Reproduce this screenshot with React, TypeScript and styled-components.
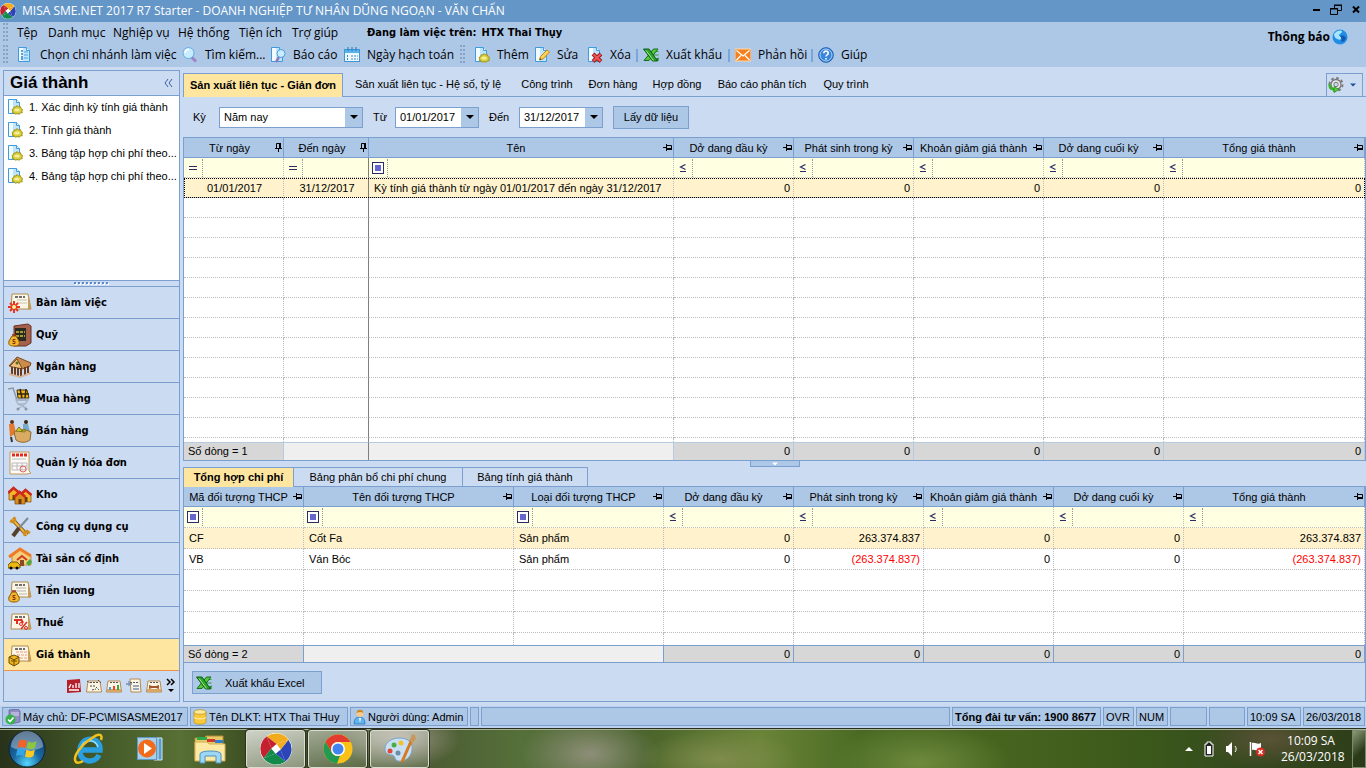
import React from "react";
import styled, { createGlobalStyle, css } from "styled-components";

const c = {
  title: "#6496c8",
  bar: "#adc7e7",
  panel: "#cbdbf1",
  line: "#7ba0cf",
  tab: "#ffe6a0",
  filter: "#ffffe1",
  selected: "#fff2cc",
  dot: "#bdbdbd",
};
const ui = `"Open Sans", "Noto Sans", sans-serif`;
const grid = `"Liberation Sans", Arial, sans-serif`;
const nav = `"DejaVu Sans Condensed", "DejaVu Sans", sans-serif`;

const Global = createGlobalStyle`
  *, *::before, *::after { box-sizing: border-box; }
  body { margin: 0; background: ${c.panel}; color: #000; font: 11px/14px ${grid}; }
  button, input, select { font: inherit; color: inherit; margin: 0; border-radius: 0; }
  button { padding: 0; border: 0; background: none; white-space: nowrap; text-align: left; }
  svg { display: block; flex: none; }
`;

const Page = styled.div`
  display: flex;
  flex-direction: column;
  min-height: 100vh;
`;

/* ---------- title, menu, toolbar ---------- */
const TitleBar = styled.header`
  display: flex;
  align-items: center;
  height: 22px;
  background: ${c.title};
  color: #fff;
  font: 12px/16px ${ui};
`;
const TitleText = styled.h1`
  flex: 1;
  margin: 0 0 0 6px;
  font: inherit;
  white-space: nowrap;
`;
const WindowButtons = styled.div`
  display: flex;
  align-items: center;
  gap: 8px;
  padding: 0 4px 2px 0;
`;
const Bars = styled.div`
  display: flex;
  height: 45px;
  background: ${c.bar};
  font: 12px/16px ${ui};
`;
const BarRows = styled.div`
  flex: 1;
  min-width: 0;
`;
const BarRow = styled.div<{ $h: number }>`
  display: flex;
  align-items: center;
  height: ${(p) => p.$h}px;
`;
const Grip = styled.span`
  width: 6px;
  height: 20px;
  margin: 0 8px 0 3px;
  background-image: radial-gradient(circle at 1px 1px, #8aa3c4 1px, transparent 1px);
  background-size: 3px 4px;
`;
const MenuButton = styled.button<{ $w: number }>`
  width: ${(p) => p.$w}px;
`;
const Working = styled.strong`
  display: flex;
  gap: 5px;
  font: 700 11px/16px ${nav};
  white-space: nowrap;
`;
const ToolButton = styled.button<{ $w: number }>`
  display: flex;
  align-items: center;
  gap: 7px;
  width: ${(p) => p.$w}px;
`;
const Separator = styled.span`
  width: 2px;
  height: 13px;
  margin-right: 5px;
  background: #7ba6da;
`;
const Notice = styled.a`
  display: flex;
  align-items: center;
  gap: 2px;
  height: 30px;
  margin-right: 18px;
  color: #000;
  font: 700 12px/16px ${ui};
  text-decoration: none;
`;

/* ---------- side panel ---------- */
const Workspace = styled.div`
  flex: 1;
  display: flex;
  gap: 3px;
  padding: 3px 0 4px 3px;
  background: ${c.panel};
`;
const Side = styled.aside`
  display: flex;
  flex-direction: column;
  width: 177px;
  flex: none;
  border: 1px solid ${c.line};
`;
const SideHead = styled.div`
  display: flex;
  align-items: center;
  justify-content: space-between;
  height: 25px;
  padding: 0 6px;
  border-bottom: 1px solid ${c.line};
`;
const SideTitle = styled.h2`
  margin: 0;
  font: 700 17px/20px ${grid};
`;
const TaskList = styled.ul`
  flex: 1;
  min-height: 184px;
  margin: 0;
  padding: 0;
  list-style: none;
  background: #fff;
`;
const TaskLink = styled.a`
  display: flex;
  align-items: center;
  gap: 6px;
  height: 23px;
  padding: 0 0 2px 3px;
  color: #000;
  text-decoration: none;
  white-space: nowrap;
`;
const SideSplit = styled.div`
  display: flex;
  align-items: center;
  justify-content: center;
  height: 6px;
  border-top: 1px solid ${c.line};
`;
const NavButton = styled.button<{ $on?: boolean }>`
  display: flex;
  align-items: center;
  gap: 4px;
  width: 100%;
  height: 32px;
  padding-left: 4px;
  border-top: 1px solid ${c.line};
  background: ${(p) => (p.$on ? c.tab : c.panel)};
  font: 700 11px/16px ${nav};
`;
const NavFoot = styled.div`
  display: flex;
  align-items: center;
  justify-content: flex-end;
  gap: 4px;
  height: 31px;
  padding-right: 3px;
  border-top: 1px solid #f0924a;
`;

/* ---------- main area ---------- */
const Main = styled.main`
  flex: 1;
  min-width: 0;
  display: flex;
  flex-direction: column;
`;
const TabStrip = styled.div`
  display: flex;
  align-items: flex-end;
  height: 27px;
  padding-right: 3px;
  border-bottom: 1px solid ${c.line};
`;
const Tab = styled.button<{ $w: number; $on?: boolean }>`
  width: ${(p) => p.$w}px;
  height: 23px;
  padding-bottom: 1px;
  text-align: center;
  ${(p) =>
    p.$on &&
    css`
      position: relative;
      height: 24px;
      margin-bottom: -1px;
      padding-bottom: 2px;
      border: 1px solid ${c.line};
      border-bottom: 0;
      background: ${c.tab};
      font-weight: 700;
    `}
`;
const Spacer = styled.span`
  flex: 1;
`;
const GearButton = styled.button`
  display: flex;
  align-items: center;
  gap: 6px;
  width: 37px;
  height: 23px;
  padding-left: 1px;
  border: 1px solid ${c.line};
  border-bottom: 0;
`;
const Query = styled.form`
  display: flex;
  align-items: center;
  height: 40px;
  padding-left: 10px;
`;
const Label = styled.label<{ $w: number }>`
  width: ${(p) => p.$w}px;
`;
const Combo = styled.span<{ $w: number }>`
  position: relative;
  display: flex;
  width: ${(p) => p.$w}px;
  height: 21px;
  margin-right: 10px;
  border: 1px solid ${c.line};
  background: #fff;
  select,
  input {
    width: 100%;
    padding: 0 4px 1px;
    border: 0;
    outline: 0;
    background: none;
    appearance: none;
  }
`;
const Drop = styled.span`
  position: absolute;
  top: 0;
  right: 0;
  bottom: 0;
  display: flex;
  align-items: center;
  justify-content: center;
  width: 17px;
  background: ${c.bar};
  pointer-events: none;
`;
const PushButton = styled.button<{ $w: number }>`
  display: flex;
  align-items: center;
  justify-content: ${(p) => (p.$w > 100 ? "flex-start" : "center")};
  gap: 13px;
  width: ${(p) => p.$w}px;
  height: 23px;
  padding: 0 3px;
  border: 1px solid ${c.line};
  background: ${c.bar};
`;

const Table = styled.table<{ $row: number; $edge: string }>`
  width: 100%;
  table-layout: fixed;
  border: 1px solid ${c.line};
  border-spacing: 0;
  background: #fff;
  th,
  td {
    padding: 0;
    overflow: hidden;
    white-space: nowrap;
    font-weight: 400;
  }
  thead th {
    height: 20px;
    border-right: 1px solid ${c.line};
    border-bottom: 1px solid ${c.line};
    background: ${c.bar};
  }
  tbody td {
    height: ${(p) => p.$row}px;
    padding: 0 3px 0 5px;
    border-right: 1px dotted ${c.dot};
    border-bottom: 1px dotted ${c.dot};
  }
  tfoot td {
    padding: 0 3px 1px 4px;
    border-top: 1px solid ${(p) => p.$edge};
    border-right: 1px solid ${(p) => p.$edge};
    background: #d7d7d7;
  }
`;
const HeadCell = styled.div`
  display: flex;
  align-items: center;
  padding-right: 1px;
  span {
    flex: 1;
    text-align: center;
  }
`;
const FilterRow = styled.tr`
  && td {
    padding: 0;
    background: ${c.filter};
  }
`;
const FilterCell = styled.div`
  display: flex;
  align-items: center;
  height: 18px;
  button {
    display: flex;
    align-items: center;
    justify-content: center;
    width: 19px;
    height: 18px;
    flex: none;
    border-right: 1px dotted #999;
  }
  input {
    flex: 1;
    min-width: 0;
    height: 18px;
    padding: 0 3px;
    border: 0;
    outline: 0;
    background: none;
  }
`;
const Row = styled.tr<{ $on?: boolean; $focus?: boolean }>`
  ${(p) => p.$on && `background: ${c.selected};`}
  ${(p) => p.$focus && "outline: 1px dotted #000; outline-offset: -1px;"}
`;
const FillRow = styled.tr<{ $h: number }>`
  && td {
    height: ${(p) => p.$h}px;
    border-bottom: 0;
  }
`;
const Cell = styled.td<{ $align?: string; $red?: boolean; $frozen?: boolean }>`
  text-align: ${(p) => p.$align || "left"};
  color: ${(p) => (p.$red ? "#f00" : "#000")};
  ${(p) => p.$frozen && "&&& { border-right: 1px solid #7f7f7f; }"}
`;
const FootRow = styled.tr<{ $h: number }>`
  height: ${(p) => p.$h}px;
`;
const BlankFoot = styled.td<{ $frozen?: boolean; $join?: boolean }>`
  &&& {
    background: #efefef;
    ${(p) => p.$frozen && "border-right: 1px solid #7f7f7f;"}
    ${(p) => p.$join && "border-right: 0;"}
  }
`;
const Splitter = styled.div`
  display: flex;
  justify-content: center;
  height: 6px;
`;
const Collapse = styled.button`
  display: flex;
  align-items: center;
  justify-content: center;
  width: 50px;
  height: 6px;
  border: 1px solid ${c.line};
  border-top: 0;
  background: ${c.bar};
`;
const SubTabs = styled.div`
  display: flex;
  height: 19px;
`;
const SubTab = styled.button<{ $w: number; $on?: boolean }>`
  width: ${(p) => p.$w}px;
  height: 19px;
  border-top: 1px solid ${c.line};
  border-right: 1px solid ${c.line};
  text-align: center;
  ${(p) =>
    p.$on &&
    css`
      position: relative;
      height: 20px;
      padding-bottom: 1px;
      border-left: 1px solid ${c.line};
      background: ${c.tab};
      font-weight: 700;
    `}
`;
const Actions = styled.div`
  flex: 1;
  padding: 8px 8px 7px;
  border: 1px solid ${c.line};
  border-top: 0;
`;

/* ---------- status bar and taskbar ---------- */
const StatusBar = styled.footer`
  display: flex;
  gap: 2px;
  height: 22px;
  padding: 1px 1px 2px 2px;
  background: #bcd1ed;
`;
const Status = styled.div<{ $w?: number; $bold?: boolean }>`
  display: flex;
  align-items: center;
  gap: 2px;
  ${(p) => (p.$w ? `width: ${p.$w}px; flex: none;` : "flex: 1;")}
  padding: 0 2px;
  border: 1px solid ${c.line};
  background: ${c.bar};
  font-weight: ${(p) => (p.$bold ? 700 : 400)};
  white-space: nowrap;
`;
const Taskbar = styled.nav`
  display: flex;
  align-items: center;
  height: 40px;
  border-top: 1px solid #26301c;
  box-shadow: inset 0 1px 0 #a9b29b;
  color: #fff;
  font: 12px/16px ${ui};
  background:
    radial-gradient(ellipse 70px 40px at 590px 25px, #8d8f78 0, transparent 100%),
    radial-gradient(ellipse 60px 30px at 400px 10px, #a09a88 0, transparent 100%),
    radial-gradient(ellipse 80px 30px at 720px 30px, #7f8c4c 0, transparent 100%),
    radial-gradient(ellipse 90px 40px at 920px 34px, #6d8a3c 0, transparent 100%),
    radial-gradient(ellipse 70px 30px at 1270px 10px, #5a5236 0, transparent 100%),
    linear-gradient(90deg, #29321a 0, #3f5326 80px, #587034 180px, #3c4e22 250px, #4c5c34 430px, #55703a 520px, #48622a 640px, #6a8437 760px, #4a6a23 860px, #47641f 1000px, #3b581b 1150px, #33481d 1250px, #2d3d18 100%);
`;
const TaskButton = styled.button<{ $w: number; $open?: boolean; $front?: boolean }>`
  display: flex;
  align-items: center;
  justify-content: center;
  width: ${(p) => p.$w}px;
  height: 38px;
  ${(p) =>
    p.$open &&
    css`
      margin-left: 3px;
      border: 1px solid #d9dccf;
      border-radius: 3px;
      box-shadow: 0 0 0 1px #2c321f;
      background: linear-gradient(165deg, rgba(255, 255, 255, ${p.$front ? 0.75 : 0.5}), rgba(255, 255, 255, ${p.$front ? 0.4 : 0.12}));
    `}
`;
const Tray = styled.div`
  display: flex;
  align-items: center;
  gap: 8px;
  margin-right: 16px;
`;
const Clock = styled.time`
  width: 60px;
  margin-right: 11px;
  text-align: center;
`;
const ShowDesktop = styled.button`
  width: 14px;
  height: 38px;
  border: 1px solid #7c8a6a;
  background: linear-gradient(135deg, #8b9a78, #2b3a18 60%);
`;

/* ---------- drawings ---------- */
const Svg = ({ w = 16, h = w, vb, children }: { w?: number; h?: number; vb?: string; children: React.ReactNode }) => (
  <svg width={w} height={h} viewBox={vb || `0 0 ${w} ${h}`} aria-hidden="true">
    {children}
  </svg>
);
const page = (
  <>
    <path d="M1.500.500h8l3 3v11h-11z" fill="#bfe4fb" stroke="#3f9bdc" />
    <path d="M2 1h4v13H2z" fill="#f0faff" />
    <path d="M9.500.500v3h3" fill="#fff" stroke="#3f9bdc" />
  </>
);
const DocList = () => (
  <Svg>
    {page}
    <path d="M4 4h2M4 7h2M4 10h2M4 12h2" stroke="#2c7fc4" strokeWidth="1.500" />
    <path d="M7 5h4M7 8h4M7 11h4" stroke="#4aa3de" />
  </Svg>
);
const Search = () => (
  <Svg>
    <path d="M9.500 10l4.500 4.500" stroke="#9a86c4" strokeWidth="3" />
    <circle cx="6.500" cy="6" r="5.500" fill="#c8ecff" stroke="#62aee0" />
    <path d="M3 6a4 4 0 0 1 4-3.500" stroke="#fff" strokeWidth="1.500" fill="none" />
  </Svg>
);
const Report = () => (
  <Svg>
    {page}
    <path d="M9 10l-3 5" stroke="#9377bd" strokeWidth="2.500" />
    <circle cx="11" cy="6.500" r="4" fill="#c9ecff" stroke="#4c9dd8" />
  </Svg>
);
const Calendar = () => (
  <Svg>
    <rect x=".5" y="2.500" width="15" height="12" fill="#eef8ff" stroke="#3f95d6" />
    <path d="M1 3h14v3H1z" fill="#58b3ec" />
    <path d="M4 0v4M8 0v4M12 0v4" stroke="#2b78b8" />
    <path d="M3.500 8v5M7 9h7M7 12h7" stroke="#3b89c8" strokeDasharray="2 1" />
  </Svg>
);
const NewDoc = () => (
  <Svg>
    {page}
    <path d="M10 6.500l1.500 1.500 2-.3.400 1.800 1.800 1-.9 1.500.5 1.700-2 .2-1 1.300-2-.6-2 .6-1-1.300-2-.2.500-1.700-.8-1.500 1.800-1 .3-1.600 2 .1z" fill="#d9cf3c" stroke="#a49617" />
    <ellipse cx="10" cy="11" rx="2.800" ry="1.600" fill="#f4ef9a" />
  </Svg>
);
const Edit = () => (
  <Svg>
    {page}
    <path d="M5.500 13l1-3.500L13 3l2.500 2L9 12z" fill="#ffd257" stroke="#c08a1b" />
    <path d="M5.500 13l.5-2 1.500 1.300z" fill="#333" />
  </Svg>
);
const Remove = () => (
  <Svg>
    {page}
    <path d="M6 7l8 7.500M14 7l-8 7.500" stroke="#a01c1c" strokeWidth="4" />
    <path d="M6.500 7.500l7 6.500M13.500 7.500l-7 6.500" stroke="#f0585a" strokeWidth="2" />
  </Svg>
);
const Excel = () => (
  <Svg>
    <path d="M8 4.500h7.500M9 8h6.500M9 11.500h6.500" stroke="#3a9c3a" />
    <path d="M15.500 14V10l-3 4z" fill="#1c7c26" />
    <path d="M15 2h-4.500L1 13.500h5z" fill="#57c83c" stroke="#15701d" />
    <path d="M.5 2H6l8.500 12H9.500z" fill="#2ea32e" stroke="#0d5e18" />
    <path d="M3 3.500l7.500 10" stroke="#a3ec7c" />
  </Svg>
);
const Mail = () => (
  <Svg>
    <rect x="0" y="2" width="16" height="12" fill="#f7801d" stroke="#ffd9a6" />
    <path d="M1.500 3.500L8 9l6.500-5.500M1.500 13L6 8.500M14.500 13L10 8.500" fill="none" stroke="#fff" strokeWidth="1.300" />
  </Svg>
);
const Help = () => (
  <Svg>
    <circle cx="8" cy="8" r="7.300" fill="#3a86dc" stroke="#1e5cae" />
    <circle cx="8" cy="8" r="6" fill="none" stroke="#a7d0f8" />
    <path d="M5.800 6.200c0-3 4.600-2.800 4.400 0 0 1.600-2.200 1.600-2.200 3.300M8 11v1.500" fill="none" stroke="#fff" strokeWidth="1.600" />
  </Svg>
);
const Logo = ({ s }: { s: number }) => (
  <Svg w={s} vb="0 0 32 32">
    <circle cx="16" cy="16" r="16" fill="#fff" />
    <g transform="rotate(8 16 16)">
      <path d="M5 5a15.500 15.500 0 0 1 22 0L16 11z" fill="#f2ab1b" />
      <path d="M27 5a15.500 15.500 0 0 1 0 22L20.500 16z" fill="#2b45b8" />
      <path d="M27 27a15.500 15.500 0 0 1-22 0l11-6.500z" fill="#118a4a" />
      <path d="M5 27A15.500 15.500 0 0 1 5 5l6.500 11z" fill="#c5202f" />
      <path d="M5 5l11 6-4.500 5z" fill="#c5202f" />
      <path d="M27 5l-6.500 11-4.500-5z" fill="#f2ab1b" />
      <path d="M27 27l-11-6.500 4.500-4.500z" fill="#2b45b8" />
      <path d="M5 27l6.500-11 4.500 4.500z" fill="#118a4a" />
    </g>
    <path d="M16 11.500l4.500 4.500-4.500 4.500-4.500-4.500z" fill="#fff" />
  </Svg>
);
const Globe = () => (
  <Svg>
    <circle cx="8" cy="8" r="7.500" fill="#1f8fe6" />
    <path d="M2 5c3-4 6-4 8-3 0 3-3 2-3 5 2 0 3 2 1 4-3-1-6-2-6-6z" fill="#a6e4ff" />
    <path d="M8 7c3-1 5 0 6 2-1 3-3 4-5 4 1-2 1-4-1-6z" fill="#1257b5" />
  </Svg>
);
const Gear = () => (
  <Svg>
    <circle cx="8" cy="7.500" r="5" fill="#e8e8e8" stroke="#777" strokeWidth="1.300" />
    <circle cx="8" cy="7.500" r="6.600" fill="none" stroke="#777" strokeWidth="1.800" strokeDasharray="2.600 2.580" />
    <circle cx="8" cy="7.500" r="2.200" fill="#cbdbf1" stroke="#777" />
    <path d="M1.500 7c0 3.500 2 5.500 5 5.500" fill="none" stroke="#35b52b" strokeWidth="2.500" />
    <path d="M6 9.500l5 3-5 3z" fill="#4bd038" stroke="#1f8a1b" strokeWidth=".7" />
  </Svg>
);
const Down = ({ fill = "#000", w = 8 }: { fill?: string; w?: number }) => (
  <Svg w={w} h={4} vb="0 0 8 4">
    <path d="M0 0h8L4 4z" fill={fill} />
  </Svg>
);
const PinSide = () => (
  <Svg w={9} h={7}>
    <path d="M0 3.500h3M3.500 0v7M3 1.500h5.500V5" fill="none" stroke="#000" />
    <path d="M3 5h6" stroke="#000" strokeWidth="2" />
  </Svg>
);
const PinDown = () => (
  <Svg w={7} h={9}>
    <path d="M0 5.500h7M3.500 6v3M1.500 5V.500h3" fill="none" stroke="#000" />
    <path d="M5 0v6" stroke="#000" strokeWidth="2" />
  </Svg>
);
const BoxMark = () => (
  <Svg w={12}>
    <rect x=".5" y=".5" width="11" height="11" fill="#fff" stroke="#2b2b66" />
    <rect x="3" y="3" width="6" height="6" fill="#6666cc" />
  </Svg>
);
const EqualMark = () => (
  <Svg w={8} h={4}>
    <path d="M0 .500h8M0 3.500h8" stroke="#2b2b66" />
  </Svg>
);
const LessMark = () => (
  <Svg w={8} h={8}>
    <path d="M6.500.500L1.500 3l5 2.500M1 7.500h6" fill="none" stroke="#2b2b66" strokeWidth="1.200" />
  </Svg>
);

const sheet = (
  <>
    <path d="M4 3h16l3 15H3z" fill="#fbf6e6" stroke="#b08b4f" />
    <path d="M20 3l3 15-3 1z" fill="#c79a55" />
    <path d="M7 6h10" stroke="#444" strokeWidth="1.500" strokeDasharray="3 1" />
  </>
);
const bag = (
  <>
    <path d="M4 13h4l3 5c1 4-1 5-5 5s-6-1-5-5z" fill="#f0b729" stroke="#8a5a0b" />
    <path d="M4 12h4" stroke="#9a3412" strokeWidth="1.500" />
    <path d="M7.500 16.500h-2.500v2h2v2H4.500" fill="none" stroke="#8a2c0b" />
  </>
);
const house = (x: number, y: number, wall: string) => (
  <g transform={`translate(${x} ${y})`}>
    <path d="M1 6l5-4 5 4v7H1z" fill={wall} stroke="#7c4a10" strokeWidth=".7" />
    <path d="M0 6l5.500-5 6 5" fill="none" stroke="#cf2a1c" strokeWidth="2.500" />
    <path d="M4.500 8h3v5h-3z" fill="#6d3a0a" />
  </g>
);
const navArt: Record<string, React.ReactNode> = {
  desk: (
    <>
      {sheet}
      <path d="M9 9h10M10 12h9" stroke="#c9c2ae" />
      <g stroke="#e8341e" strokeWidth="2">
        <path d="M6 10v12M0 16h12M2 12l8 8M10 12l-8 8" />
      </g>
      <circle cx="6" cy="16" r="2" fill="#fff3a0" />
    </>
  ),
  safe: (
    <>
      <path d="M6 3l14-2 3 2v17l-5 3H6z" fill="#a4604a" stroke="#6a3325" />
      <rect x="7" y="5" width="11" height="13" fill="#2b2a20" />
      <path d="M8 9h9M8 13h9" stroke="#a89b35" strokeWidth="2" strokeDasharray="3 1" />
      {bag}
    </>
  ),
  bank: (
    <>
      <path d="M1 11L9 2l14 6-1 3-8 3z" fill="#c98c4b" stroke="#7a4a1c" />
      <path d="M2 11l7-7 5 9" fill="#eec07c" stroke="#7a4a1c" />
      <path d="M4 12v7M7 12v8M10 13v8M13 13v8M17 12v8M20 11v7" stroke="#6b3b19" strokeWidth="2" />
      <path d="M1 20l11 3 11-4v-2l-11 4-11-3z" fill="#d7b192" />
      <circle cx="9" cy="8" r="1.500" fill="#51701c" />
    </>
  ),
  cart: (
    <>
      <path d="M0 2l5-1 4 12h11" fill="none" stroke="#8c98a8" strokeWidth="1.500" />
      <path d="M9 3h10l2 8H10z" fill="#f6b71c" stroke="#4a3208" />
      <path d="M12 2l2 9M18 2l-1 9M9 7h12" stroke="#2e2508" strokeWidth="1.500" />
      <path d="M8 13h12l-3 4H10zM10 17l8 4M17 17l-7 5" fill="none" stroke="#a9b7c8" strokeWidth="1.500" />
      <circle cx="10" cy="22" r="1.500" fill="#8995a6" />
      <circle cx="18" cy="22" r="1.500" fill="#8995a6" />
    </>
  ),
  sell: (
    <>
      <circle cx="4" cy="3" r="2" fill="#5a3413" />
      <path d="M1 5h5l2 9-6 4z" fill="#e57a2c" />
      <circle cx="18" cy="3" r="2" fill="#38250f" />
      <path d="M15 5h5l2 8h-7z" fill="#79a9c9" />
      <path d="M6 13c4-3 12-3 17 0l-1 8c-4 3-10 3-14 0z" fill="#d9ab63" stroke="#94662a" />
      <path d="M8 12l3-4 3 4 3-2v3z" fill="#f2c21e" stroke="#6f7a16" />
      <path d="M3 18l1 5" stroke="#333" strokeWidth="2" />
    </>
  ),
  invoice: (
    <>
      <path d="M2 1h19v19l2 2-4 1H2z" fill="#fdfbf4" stroke="#c4985a" />
      <path d="M4 4h15" stroke="#e12a1f" strokeWidth="3" strokeDasharray="3 1" />
      <path d="M4 8h14M4 12h15v7H4zM9 12v7M14 12v7M4 15h15" fill="none" stroke="#b9b9c4" />
      <circle cx="15" cy="18" r="3" fill="none" stroke="#e8625a" />
    </>
  ),
  store: (
    <>
      {house(0, 4, "#f2b429")}
      {house(12, 6, "#f2b429")}
      {house(6, 8, "#d98b1e")}
    </>
  ),
  tools: (
    <>
      <path d="M4 4l15 16" stroke="#6d4508" strokeWidth="4" />
      <path d="M4 4l15 16" stroke="#f3b33a" strokeWidth="2.500" />
      <path d="M2 6l3 1 2-2-1-3M17 21l-1-3 3-2 3 2" fill="none" stroke="#d08d1c" strokeWidth="2.500" />
      <path d="M20 3l-9 10" stroke="#7f8894" strokeWidth="2" />
      <path d="M11 13l-6 8" stroke="#54402d" strokeWidth="4" />
    </>
  ),
  asset: (
    <>
      <path d="M4 9L13 2l10 7v9H4z" fill="#f3cf7d" stroke="#b56c1c" strokeWidth=".7" />
      <path d="M1 10L12 2l11 7" fill="none" stroke="#f07a25" strokeWidth="3" />
      <path d="M9 13l5-4 5 4" fill="none" stroke="#d0391c" strokeWidth="2" />
      <rect x="12" y="13" width="4" height="6" fill="#8a4a22" />
      <path d="M18 16l4-4 2 3-3 4z" fill="#48a83a" />
      <path d="M0 18l3-3h6l3 3v3H0z" fill="#edb713" stroke="#77560a" />
      <circle cx="3" cy="21" r="1.500" />
      <circle cx="9" cy="21" r="1.500" />
    </>
  ),
  wage: (
    <>
      {sheet}
      <path d="M8 9h10M8 12h10M11 15h8" stroke="#b5b5b5" />
      {bag}
    </>
  ),
  tax: (
    <>
      {sheet}
      <path d="M6 9h8M9 9v4M13 8l2 4" stroke="#e02c22" strokeWidth="2" />
      <path d="M19 11l-6 7" stroke="#e02c22" strokeWidth="1.500" />
      <circle cx="13" cy="13" r="1.500" fill="none" stroke="#e02c22" />
      <circle cx="18" cy="17" r="1.500" fill="none" stroke="#e02c22" />
    </>
  ),
  cost: (
    <>
      {sheet}
      <path d="M8 9h11M9 12h10M12 15h8" stroke="#eb9c7a" strokeDasharray="3 1" />
      <path d="M1 14l5-2 5 2v6l-5 3-5-3z" fill="#eeb41c" stroke="#6f4c06" />
      <path d="M1 14l5 3 5-3M6 17v6" fill="none" stroke="#6f4c06" />
      <path d="M3 18h6" stroke="#6f4c06" />
    </>
  ),
};
const MiniRed = () => (
  <Svg>
    <path d="M1 2l13-1 1 13-14 1z" fill="#b3202c" />
    <path d="M3 10l2-4M7 10V7M10 5v5M13 5v5M3 12h10" stroke="#fff" strokeWidth="1.300" />
  </Svg>
);
const MiniSheet = ({ kind }: { kind: number }) => (
  <Svg>
    <path d={kind === 3 ? "M4 1h10l1 13H5z" : "M2 3h12l1.500 11H.5z"} fill="#fbf5e4" stroke="#b48a52" />
    {kind % 2 === 0 && <path d="M1 11h14v3H1z" fill="#d9a763" />}
    <path d="M4 4.500h9" stroke="#555" strokeDasharray="2 1" />
    {kind === 1 && <path d="M1 3l3 2M12 2l3 3M4 8h5M6 12l4-1M10 9l3 3" stroke="#4b4b4b" strokeDasharray="2 1" />}
    {kind === 2 && (
      <>
        <path d="M4 12V9" stroke="#3e9be0" strokeWidth="2" />
        <path d="M8 12V8" stroke="#e8452c" strokeWidth="2" />
        <path d="M12 12V7" stroke="#3ba53b" strokeWidth="2" />
      </>
    )}
    {kind === 3 && <path d="M0 6h6M3 3v5M7 8h6M7 11h6" stroke="#7890b0" strokeWidth="1.300" />}
    {kind === 4 && <path d="M3 7v4l3-1h4l3 1V7l-3 1H6z" fill="#a3562a" />}
  </Svg>
);
const More = () => (
  <Svg w={10} h={16}>
    <path d="M1 1l3 3-3 3M5 1l3 3-3 3" fill="none" stroke="#000" strokeWidth="1.500" />
    <path d="M2 11h6l-3 3z" />
  </Svg>
);

const StartOrb = () => (
  <Svg w={38}>
    <defs>
      <radialGradient id="orb" cx="50%" cy="90%" r="85%">
        <stop offset="0" stopColor="#55d8ff" />
        <stop offset=".45" stopColor="#1a6aa4" />
        <stop offset="1" stopColor="#12385e" />
      </radialGradient>
    </defs>
    <circle cx="19" cy="19" r="18" fill="url(#orb)" stroke="#0d2538" />
    <path d="M3 17a16 16 0 0 1 32 0c-10 5-22 5-32 0z" fill="#fff" opacity=".35" />
    <path d="M11 11c3-2 5-1.500 8 0l-1.500 7c-3-1.500-5-1.500-8 0z" fill="#f2622a" />
    <path d="M20 11.500c3 1.500 5 1.500 8.500-.5L27 18c-3 1.500-5.500 1.500-8.500 0z" fill="#8cc63e" />
    <path d="M9.200 19.500c3-1.500 5-1.500 8 0L16 26c-3-1.500-5-1.500-8 0z" fill="#35a5e8" />
    <path d="M18.300 19.800c3 1.500 5.200 1.500 8.500 0L25.500 26c-3 2-5.500 2-8.500.5z" fill="#fcc921" />
  </Svg>
);
const Ie = () => (
  <Svg w={32}>
    <path d="M7 17h20c1-14-20-15-20 1 0 12 15 13 19 4" fill="none" stroke="#2a9fe0" strokeWidth="5.500" />
    <path d="M8 15c2-9 14-10 17-1" fill="none" stroke="#9be0fb" strokeWidth="1.500" />
    <path d="M28 7c2-6-2-7-9-2C8 12-1 24 3 29c1 1 4 1 7-1" fill="none" stroke="#f3c01c" strokeWidth="2.500" />
  </Svg>
);
const MediaPlayer = () => (
  <Svg w={28}>
    <path d="M18 3h8v22h-8z" fill="#5b9ccb" stroke="#d0e8f8" />
    <path d="M22 3v22" stroke="#cde6f6" />
    <rect x="1.500" y="2.500" width="19" height="22" fill="#a9d0ea" stroke="#5f9ac4" />
    <circle cx="11" cy="13.500" r="9" fill="#f26a1b" />
    <path d="M8 8l8 5.500L8 19z" fill="#fff" />
  </Svg>
);
const Explorer = () => (
  <Svg w={34} h={32}>
    <path d="M2 5h9l2-2h17v24H2z" fill="#e9c96a" stroke="#b58e31" />
    <path d="M4 4h10v3H4z" fill="#2fa84a" />
    <path d="M14 6h8v3h-8z" fill="#d5362b" />
    <path d="M22 7h8v3h-8z" fill="#2d7fd4" />
    <path d="M2 9h12l2 2h16v17H2z" fill="#fbe9a4" stroke="#d3b052" />
    <path d="M7 30v-9c0-4 21-4 21 0v9h-5v-7H12v7z" fill="#9fd6f4" stroke="#4b92c2" />
  </Svg>
);
const Chrome = () => (
  <Svg w={30}>
    <circle cx="15" cy="15" r="14.500" fill="#fbc116" />
    <path d="M2.500 7.700A14.500 14.500 0 0 1 27.600 8H15a7 7 0 0 0-6.500 4.500L8.800 18.500z" fill="#e33b2e" />
    <path d="M2.500 7.700l6.400 10.800A7 7 0 0 0 17 21.700L14 29.500A14.500 14.500 0 0 1 2.500 7.700z" fill="#229a52" />
    <circle cx="15" cy="15" r="7" fill="#fff" />
    <circle cx="15" cy="15" r="5.500" fill="#4285f0" />
  </Svg>
);
const Paint = () => (
  <Svg w={34} h={32}>
    <path d="M16 5c10 0 14 5 13 12-1 8-8 12-14 11-4-1-2-5-6-6-4 0-7-2-7-6C2 9 9 5 16 5z" fill="#c9e0f4" stroke="#7ba1c7" />
    <circle cx="7" cy="18" r="2.500" fill="#e04a34" />
    <circle cx="11" cy="12" r="2.500" fill="#4cae3c" />
    <circle cx="18" cy="10" r="2.500" fill="#f2c22a" />
    <circle cx="15" cy="20" r="2.500" fill="#6b8ba6" />
    <path d="M29 6L19 29" stroke="#d77a1e" strokeWidth="3" />
    <path d="M27 7l2-6 3 1 1 4-4 5z" fill="#c59a5c" />
  </Svg>
);

/* ---------- data ---------- */
const menus: [string, number][] = [
  ["Tệp", 31], ["Danh mục", 65], ["Nghiệp vụ", 65], ["Hệ thống", 61], ["Tiện ích", 53], ["Trợ giúp", 75],
];
const tools: [string, number, () => React.ReactElement][][] = [
  [["Chọn chi nhánh làm việc", 165, DocList], ["Tìm kiếm...", 88, Search], ["Báo cáo", 74, Report], ["Ngày hạch toán", 113, Calendar]],
  [["Thêm", 60, NewDoc], ["Sửa", 53, Edit], ["Xóa", 49, Remove]],
  [["Xuất khẩu", 85, Excel]],
  [["Phản hồi", 76, Mail]],
  [["Giúp", 60, Help]],
];
const tasks = ["1. Xác định kỳ tính giá thành", "2. Tính giá thành", "3. Bảng tập hợp chi phí theo...", "4. Bảng tập hợp chi phí theo..."];
const modules: [string, string][] = [
  ["Bàn làm việc", "desk"], ["Quỹ", "safe"], ["Ngân hàng", "bank"], ["Mua hàng", "cart"], ["Bán hàng", "sell"],
  ["Quản lý hóa đơn", "invoice"], ["Kho", "store"], ["Công cụ dụng cụ", "tools"], ["Tài sản cố định", "asset"],
  ["Tiền lương", "wage"], ["Thuế", "tax"], ["Giá thành", "cost"],
];
const tabs: [string, number][] = [
  ["Sản xuất liên tục - Giản đơn", 160], ["Sản xuất liên tục - Hệ số, tỷ lệ", 170], ["Công trình", 68],
  ["Đơn hàng", 64], ["Hợp đồng", 64], ["Báo cáo phân tích", 106], ["Quy trình", 62],
];
type Col = { t: string; w?: number; op: "eq" | "box" | "le"; align?: string; frozen?: boolean };
const money = (widths: (number | undefined)[]): Col[] =>
  ["Dở dang đầu kỳ", "Phát sinh trong kỳ", "Khoản giảm giá thành", "Dở dang cuối kỳ", "Tổng giá thành"].map((t, i) => ({
    t, w: widths[i], op: "le", align: "right",
  }));
const periodCols: Col[] = [
  { t: "Từ ngày", w: 100, op: "eq", align: "center" },
  { t: "Đến ngày", w: 85, op: "eq", align: "center", frozen: true },
  { t: "Tên", w: 305, op: "box" },
  ...money([120, 120, 130, 120, undefined]),
];
const costCols: Col[] = [
  { t: "Mã đối tượng THCP", w: 120, op: "box" },
  { t: "Tên đối tượng THCP", w: 210, op: "box" },
  { t: "Loại đối tượng THCP", w: 150, op: "box" },
  ...money([130, 130, 130, 130, undefined]),
];
const periodRows = [["01/01/2017", "31/12/2017", "Kỳ tính giá thành từ ngày 01/01/2017 đến ngày 31/12/2017", "0", "0", "0", "0", "0"]];
const costRows = [
  ["CF", "Cốt Fa", "Sản phẩm", "0", "263.374.837", "0", "0", "263.374.837"],
  ["VB", "Ván Bóc", "Sản phẩm", "0", "(263.374.837)", "0", "0", "(263.374.837)"],
];

type GridProps = {
  cols: Col[]; rows: string[][]; blanks: number; rowH: number; fill: number; footH: number; edge: string; pinned?: boolean;
};
const DataGrid = ({ cols, rows, blanks, rowH, fill, footH, edge, pinned }: GridProps) => (
  <Table $row={rowH} $edge={edge}>
    <colgroup>{cols.map((k) => <col key={k.t} width={k.w} />)}</colgroup>
    <thead>
      <tr>
        {cols.map((k, i) => (
          <th key={k.t} scope="col">
            <HeadCell>
              <span>{k.t}</span>
              {pinned && i < 2 ? <PinDown /> : <PinSide />}
            </HeadCell>
          </th>
        ))}
      </tr>
    </thead>
    <tbody>
      <FilterRow>
        {cols.map((k) => (
          <Cell key={k.t} $frozen={k.frozen}>
            <FilterCell>
              <button type="button" aria-label={`Điều kiện lọc ${k.t}`}>
                {k.op === "eq" ? <EqualMark /> : k.op === "box" ? <BoxMark /> : <LessMark />}
              </button>
              <input aria-label={`Lọc ${k.t}`} />
            </FilterCell>
          </Cell>
        ))}
      </FilterRow>
      {rows.map((r, n) => (
        <Row key={n} $on={n === 0} $focus={pinned && n === 0}>
          {r.map((v, i) => (
            <Cell key={i} $align={cols[i].align} $frozen={cols[i].frozen} $red={v.startsWith("(")}>{v}</Cell>
          ))}
        </Row>
      ))}
      {Array.from({ length: blanks }, (_, n) => (
        <Row key={n}>{cols.map((k) => <Cell key={k.t} $frozen={k.frozen} />)}</Row>
      ))}
      <FillRow $h={fill}>{cols.map((k) => <Cell key={k.t} $frozen={k.frozen} />)}</FillRow>
    </tbody>
    <tfoot>
      <FootRow $h={footH}>
        <Cell>Số dòng = {rows.length}</Cell>
        <BlankFoot $frozen={cols[1].frozen} $join={!cols[1].frozen} />
        <BlankFoot />
        {cols.slice(3).map((k) => <Cell key={k.t} $align="right">0</Cell>)}
      </FootRow>
    </tfoot>
  </Table>
);

export default function App() {
  return (
    <Page>
      <Global />
      <TitleBar>
        <Logo s={16} />
        <TitleText>MISA SME.NET 2017 R7 Starter - DOANH NGHIỆP TƯ NHÂN DŨNG NGOẠN - VĂN CHẤN</TitleText>
        <WindowButtons>
          <button aria-label="Thu nhỏ"><Svg w={12}><path d="M3 6h7" stroke="#000" strokeWidth="2" /></Svg></button>
          <button aria-label="Khôi phục">
            <Svg w={12}>
              <path d="M4.500 4V1.500h7v5H8M4 1h8" fill="none" stroke="#000" />
              <path d="M.5 4.500h7v6h-7zM0 5h8" fill="none" stroke="#000" />
            </Svg>
          </button>
          <button aria-label="Đóng"><Svg w={12}><path d="M3 2.500l6 6M9 2.500l-6 6" stroke="#000" strokeWidth="2" /></Svg></button>
        </WindowButtons>
      </TitleBar>
      <Bars>
        <BarRows>
          <BarRow $h={22}>
            <Grip />
            {menus.map(([t, w]) => <MenuButton key={t} $w={w}>{t}</MenuButton>)}
            <Working><span>Đang làm việc trên:</span><span>HTX Thai Thụy</span></Working>
          </BarRow>
          <BarRow $h={22}>
            {tools.map((group, g) => (
              <React.Fragment key={g}>
                {g < 2 ? <Grip /> : <Separator />}
                {group.map(([t, w, Icon]) => <ToolButton key={t} $w={w}><Icon />{t}</ToolButton>)}
              </React.Fragment>
            ))}
          </BarRow>
        </BarRows>
        <Notice href="#notice">Thông báo<Globe /></Notice>
      </Bars>

      <Workspace>
        <Side>
          <SideHead>
            <SideTitle>Giá thành</SideTitle>
            <button aria-label="Thu gọn"><Svg w={9} h={8}><path d="M4 0L1 4l3 4M8 0L5 4l3 4" fill="none" stroke="#3c5f9c" /></Svg></button>
          </SideHead>
          <TaskList>
            {tasks.map((t) => <li key={t}><TaskLink href="#task"><NewDoc /><span>{t}</span></TaskLink></li>)}
          </TaskList>
          <SideSplit>
            <Svg w={36} h={3}><path d="M1 2h36" stroke="#fff" strokeWidth="2" strokeDasharray="2 2" /><path d="M0 1h36" stroke="#5c8ac8" strokeWidth="2" strokeDasharray="2 2" /></Svg>
          </SideSplit>
          <nav>
            {modules.map(([t, art], i) => (
              <NavButton key={t} $on={i === modules.length - 1}><Svg w={24}>{navArt[art]}</Svg>{t}</NavButton>
            ))}
          </nav>
          <NavFoot>
            <button aria-label="Sổ cái"><MiniRed /></button>
            {["Hợp đồng", "Ngân sách", "Tổng hợp", "Báo cáo"].map((t, i) => <button key={t} aria-label={t}><MiniSheet kind={i + 1} /></button>)}
            <button aria-label="Thêm phân hệ"><More /></button>
          </NavFoot>
        </Side>

        <Main>
          <TabStrip>
            {tabs.map(([t, w], i) => <Tab key={t} $w={w} $on={i === 0}>{t}</Tab>)}
            <Spacer />
            <GearButton aria-label="Tùy chọn"><Gear /><Down fill="#1d4f9c" w={6} /></GearButton>
          </TabStrip>
          <Query onSubmit={(e) => e.preventDefault()}>
            <Label $w={26} htmlFor="period">Kỳ</Label>
            <Combo $w={144}><select id="period"><option>Năm nay</option></select><Drop><Down /></Drop></Combo>
            <Label $w={22} htmlFor="from">Từ</Label>
            <Combo $w={84}><input id="from" defaultValue="01/01/2017" /><Drop><Down /></Drop></Combo>
            <Label $w={30} htmlFor="to">Đến</Label>
            <Combo $w={84}><input id="to" defaultValue="31/12/2017" /><Drop><Down /></Drop></Combo>
            <PushButton $w={76}>Lấy dữ liệu</PushButton>
          </Query>
          <DataGrid cols={periodCols} rows={periodRows} blanks={12} rowH={20} fill={4} footH={18} edge="#b6cbe0" pinned />
          <Splitter><Collapse aria-label="Ẩn chi tiết"><Down fill="#fff" w={6} /></Collapse></Splitter>
          <SubTabs>
            <SubTab $w={111} $on>Tổng hợp chi phí</SubTab>
            <SubTab $w={169}>Bảng phân bổ chi phí chung</SubTab>
            <SubTab $w={125}>Bảng tính giá thành</SubTab>
          </SubTabs>
          <DataGrid cols={costCols} rows={costRows} blanks={3} rowH={21} fill={12} footH={17} edge={c.line} />
          <Actions><PushButton $w={130}><Excel />Xuất khẩu Excel</PushButton></Actions>
        </Main>
      </Workspace>

      <StatusBar>
        <Status $w={186}>
          <Svg><path d="M4 1l9-1 2 2v11l-9 2-2-2z" fill="#8f8fc4" stroke="#5b5b96" strokeWidth=".7" /><path d="M6 4h8M6 6h8" stroke="#dcdcf4" /><circle cx="5.500" cy="10.500" r="5" fill="#37b24a" /><path d="M3 10.500l2 2 3.500-4" fill="none" stroke="#fff" strokeWidth="1.600" /></Svg>
          Máy chủ: DF-PC\MISASME2017
        </Status>
        <Status $w={158}>
          <Svg w={14} h={16}><path d="M1 3v10c0 3 12 3 12 0V3z" fill="#f9c93c" stroke="#b98c17" strokeWidth=".7" /><ellipse cx="7" cy="3" rx="6" ry="2.300" fill="#fdeb9c" stroke="#b98c17" strokeWidth=".7" /><path d="M1 8c0 2.500 12 2.500 12 0" fill="none" stroke="#fff3b8" /></Svg>
          Tên DLKT: HTX Thai THuy
        </Status>
        <Status $w={118}>
          <Svg w={13} h={16}><path d="M1 15c0-6 3-7 5.500-7S12 9 12 15z" fill="#5fb4ee" stroke="#1f6db4" strokeWidth=".7" /><path d="M6 9l1 5 1-5" fill="#fff" /><circle cx="7" cy="4.500" r="3.500" fill="#f6c98c" /><path d="M3.500 4C3.500-.5 10.500-.5 10.500 4 8 2.500 6 3 3.500 4z" fill="#c88a1c" /></Svg>
          Người dùng: Admin
        </Status>
        <Status $w={9} />
        <Status />
        <Status $w={149} $bold>Tổng đài tư vấn: 1900 8677</Status>
        <Status $w={31}>OVR</Status>
        <Status $w={32}>NUM</Status>
        <Status $w={37} />
        <Status $w={36} />
        <Status $w={54}>10:09 SA</Status>
        <Status $w={62}>26/03/2018</Status>
      </StatusBar>

      <Taskbar>
        <TaskButton $w={54} aria-label="Start"><StartOrb /></TaskButton>
        <TaskButton $w={70} aria-label="Internet Explorer"><Ie /></TaskButton>
        <TaskButton $w={52} aria-label="Media Player"><MediaPlayer /></TaskButton>
        <TaskButton $w={67} aria-label="Explorer"><Explorer /></TaskButton>
        <TaskButton $w={59} $open $front aria-label="MISA SME.NET"><Logo s={32} /></TaskButton>
        <TaskButton $w={59} $open aria-label="Chrome"><Chrome /></TaskButton>
        <TaskButton $w={59} $open aria-label="Paint"><Paint /></TaskButton>
        <Spacer />
        <Tray>
          <Svg w={8} h={4}><path d="M0 4h8L4 0z" fill="#fff" /></Svg>
          <Svg><path d="M6 1h4v2h2v12H4V3h2z" fill="#222" stroke="#fff" /><path d="M6 5h4v8H6z" fill="#fff" /></Svg>
          <Svg><path d="M1 5h2l4-4v14l-4-4H1z" fill="#fff" /><path d="M10 5c1.500 2 1.500 4 0 6" fill="none" stroke="#fff" /></Svg>
          <Svg><path d="M1.500 1v14" stroke="#fff" strokeWidth="1.500" /><path d="M3 2c4-1 5 2 9 0v7c-4 2-5-1-9 0z" fill="#fff" /><circle cx="11.500" cy="11" r="4.500" fill="#d92b20" /><path d="M9.500 9l4 4M13.500 9l-4 4" stroke="#fff" strokeWidth="1.500" /></Svg>
        </Tray>
        <Clock>10:09 SA<br />26/03/2018</Clock>
        <ShowDesktop aria-label="Show desktop" />
      </Taskbar>
    </Page>
  );
}
